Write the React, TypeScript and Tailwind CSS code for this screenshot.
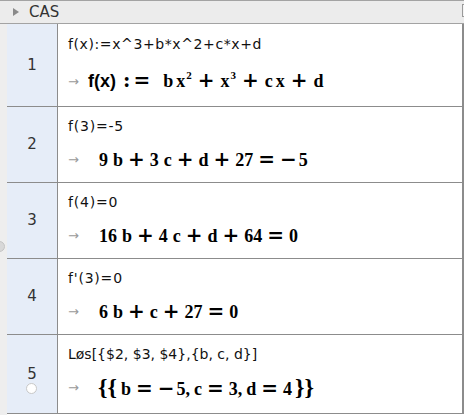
import React from "react";

const sans = { fontFamily: '"DejaVu Sans", sans-serif' };
const serif = { fontFamily: '"Liberation Serif", serif' };
const opFont = { fontFamily: '"DejaVu Serif", serif' };
const fxFont = { fontFamily: '"Liberation Sans", sans-serif' };

function Arrow() {
  return (
    <span className="text-[#9a9a9a] text-[13px] w-[14px] inline-block" style={sans}>
      →
    </span>
  );
}

function Op({ c, m = "mx-[5px]" }: { c: string; m?: string }) {
  return (
    <span className={`${m} text-[20px] leading-[24px]`} style={opFont}>
      {c}
    </span>
  );
}

function Minus() {
  return (
    <span className="mr-[2px] text-[20px] leading-[24px]" style={opFont}>
      −
    </span>
  );
}

function Sup({ c }: { c: string }) {
  return <span className="text-[11px] relative top-[-8px] ml-[1px]">{c}</span>;
}

type RowProps = {
  n: number;
  h: string;
  input: string;
  out: React.ReactNode;
  outPad: string;
  circle?: boolean;
  inputTop: string;
  gap: string;
  track?: string;
};

function Row({ n, h, input, out, outPad, circle, inputTop, gap, track = "" }: RowProps) {
  return (
    <div className={`flex ${h} border-b border-[#8c8c8c]`}>
      <div className="w-[51px] shrink-0 bg-[#e6edf8] border-r border-[#8c8c8c] flex flex-col items-center justify-center relative">
        <span className="text-[15px] text-[#333]" style={sans}>
          {n}
        </span>
        {circle && (
          <span className="absolute left-[19px] top-[48px] w-[11px] h-[11px] rounded-full bg-white border border-[#c8c8c8]" />
        )}
      </div>
      <div className="flex-1 border-r-2 border-[#8c8c8c] pl-[10px] flex flex-col">
        <div className={`${inputTop} ${track} text-[14px] text-[#111] leading-[18px] whitespace-nowrap`} style={sans}>
          {input}
        </div>
        <div className={`${gap} flex items-center whitespace-nowrap`}>
          <Arrow />
          <div className={`${outPad} text-[18px] font-bold text-black leading-[24px] flex items-baseline`} style={serif}>
            {out}
          </div>
        </div>
      </div>
    </div>
  );
}

export default function App() {
  return (
    <div className="w-[464px] h-[415px] bg-white overflow-hidden flex flex-col">
      <div className="h-[24px] shrink-0 bg-[#ececec] border-t border-b border-[#a3a3a3] flex items-center relative">
        <svg className="ml-[13px]" width="6" height="8" viewBox="0 0 6 8">
          <polygon points="0,0 6,4 0,8" fill="#8a8a8a" />
        </svg>
        <span className="ml-[10px] text-[15px] text-[#333]" style={sans}>CAS</span>
        <span className="absolute right-[-8px] top-[3px] w-[10px] h-[13px] border border-[#9a9a9a] bg-[#f4f4f4]" />
      </div>
      <div className="flex flex-1">
        <div className="w-[7px] shrink-0 bg-[#eeeeee] relative">
          <span className="absolute left-[-6px] top-[217px] w-[11px] h-[11px] rounded-full bg-[#d8d8d8] border border-[#c4c4c4]" />
        </div>
        <div className="flex-1 flex flex-col">
          <Row
            n={1}
            h="h-[83px]"
            inputTop="mt-[11px]"
            gap="mt-[15px]"
            outPad="ml-[6px]"
            track="tracking-[0.6px]"
            input="f(x):=x^3+b*x^2+c*x+d"
            out={
              <>
                <span style={fxFont} className="text-[18px]">f(x)</span>
                <span style={opFont} className="text-[20px] leading-[24px] ml-[7px]">:</span>
                <span style={opFont} className="text-[20px] leading-[24px] ml-[3px] mr-[13px]">=</span>
                <span>b</span>
                <span className="ml-[3px]">x<Sup c="2" /></span>
                <Op c="+" m="mx-[6px]" />
                <span>x<Sup c="3" /></span>
                <Op c="+" m="mx-[6px]" />
                <span>c</span>
                <span className="ml-[3px]">x</span>
                <Op c="+" m="mx-[6px]" />
                <span>d</span>
              </>
            }
          />
          <Row
            n={2}
            h="h-[76px]"
            inputTop="mt-[10px]"
            gap="mt-[12px]"
            outPad="ml-[17px]"
            track="tracking-[0.8px]"
            input="f(3)=-5"
            out={
              <>
                <span>9</span><span className="ml-[5px]">b</span>
                <Op c="+" />
                <span>3</span><span className="ml-[5px]">c</span>
                <Op c="+" />
                <span>d</span>
                <Op c="+" />
                <span>27</span>
                <Op c="=" />
                <Minus /><span>5</span>
              </>
            }
          />
          <Row
            n={3}
            h="h-[76px]"
            inputTop="mt-[10px]"
            gap="mt-[12px]"
            outPad="ml-[17px]"
            track="tracking-[0.8px]"
            input="f(4)=0"
            out={
              <>
                <span>16</span><span className="ml-[5px]">b</span>
                <Op c="+" />
                <span>4</span><span className="ml-[5px]">c</span>
                <Op c="+" />
                <span>d</span>
                <Op c="+" />
                <span>64</span>
                <Op c="=" />
                <span>0</span>
              </>
            }
          />
          <Row
            n={4}
            h="h-[76px]"
            inputTop="mt-[10px]"
            gap="mt-[12px]"
            outPad="ml-[17px]"
            track="tracking-[0.8px]"
            input="f'(3)=0"
            out={
              <>
                <span>6</span><span className="ml-[5px]">b</span>
                <Op c="+" />
                <span>c</span>
                <Op c="+" />
                <span>27</span>
                <Op c="=" />
                <span>0</span>
              </>
            }
          />
          <Row
            n={5}
            h="h-[79px]"
            inputTop="mt-[10px]"
            gap="mt-[12px]"
            outPad="ml-[16px]"
            circle
            input="Løs[{$2, $3, $4},{b, c, d}]"
            out={
              <>
                <span className="text-[24px] leading-[24px]">{"{{"}</span>
                <span className="ml-[4px]">b</span>
                <Op c="=" m="mx-[5px]" />
                <Minus /><span>5,</span>
                <span className="ml-[4px]">c</span>
                <Op c="=" m="mx-[5px]" />
                <span>3,</span>
                <span className="ml-[4px]">d</span>
                <Op c="=" m="mx-[5px]" />
                <span>4</span>
                <span className="ml-[3px] text-[24px] leading-[24px]">{"}}"}</span>
              </>
            }
          />
        </div>
      </div>
    </div>
  );
}
